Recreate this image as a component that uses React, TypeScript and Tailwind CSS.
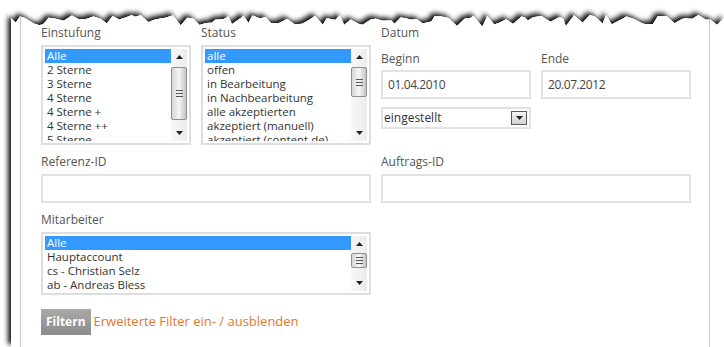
import React from "react";

function makeTorn() {
  let s = 11;
  const rnd = () => {
    s = (s * 9301 + 49297) % 233280;
    return s / 233280;
  };
  const pts: [number, number][] = [];
  let x = 11;
  while (x < 724) {
    let y = 15 + rnd() * 5;
    if (rnd() < 0.35) y += 4 + rnd() * 4;
    pts.push([x, Math.round(y * 10) / 10]);
    x += 3 + rnd() * 6;
  }
  pts.push([724, 18]);
  return pts;
}

function TornEdge() {
  const pts = makeTorn();
  const first = pts[0];
  const last = pts[pts.length - 1];
  const line = pts.map((p) => `L${p[0]},${p[1]}`).join(" ");
  const paper = `M11,347 ${line} L724,347 Z`;
  const rev = [...pts].reverse().map((p) => `L${p[0]},${p[1]}`).join(" ");
  const outside = `M0,0 L724,0 L724,${last[1]} ${rev} L11,${first[1]} L11,347 L0,347 Z`;
  return (
    <svg
      className="absolute inset-0 pointer-events-none"
      width="724"
      height="347"
      viewBox="0 0 724 347"
    >
      <defs>
        <clipPath id="outsidePaper">
          <path d={outside} />
        </clipPath>
        <filter id="tearShadow" filterUnits="userSpaceOnUse" x="-30" y="-30" width="790" height="420">
          <feDropShadow dx="-3" dy="-3" stdDeviation="2.8" floodColor="#000" floodOpacity="0.95" />
        </filter>
      </defs>
      <g clipPath="url(#outsidePaper)">
        <rect x="0" y="0" width="724" height="347" fill="#ffffff" />
        <path d={paper} fill="#ffffff" filter="url(#tearShadow)" />
      </g>
    </svg>
  );
}

function Arrow({ down }: { down?: boolean }) {
  return (
    <svg width="7" height="4" viewBox="0 0 7 4">
      {down ? (
        <polygon points="0,0 7,0 3.5,4" fill="#222" />
      ) : (
        <polygon points="0,4 7,4 3.5,0" fill="#222" />
      )}
    </svg>
  );
}

function ScrollBar({ thumb }: { thumb: string }) {
  return (
    <div className="w-[16px] shrink-0 flex flex-col bg-gradient-to-r from-[#f7f7f7] to-[#ececec]">
      <div className="h-[16px] shrink-0 flex items-center justify-center">
        <Arrow />
      </div>
      <div
        className={`${thumb} shrink-0 rounded-[2px] border border-[#8f8f8f] bg-gradient-to-r from-[#d6d6d6] via-[#f6f6f6] to-[#c4c4c4] flex flex-col items-center justify-center gap-[2px]`}
      >
        <div className="w-[7px] h-[1px] bg-[#555]" />
        <div className="w-[7px] h-[1px] bg-[#555]" />
        <div className="w-[7px] h-[1px] bg-[#555]" />
      </div>
      <div className="flex-1" />
      <div className="h-[16px] shrink-0 flex items-center justify-center">
        <Arrow down />
      </div>
    </div>
  );
}

function ListBox({ items, h, thumb }: { items: string[]; h: string; thumb: string }) {
  return (
    <div className={`${h} flex border-2 border-[#dedede] p-[2px] bg-white`}>
      <div className="flex-1 min-w-0 overflow-hidden">
        {items.map((it, i) => (
          <div
            key={i}
            className={
              i === 0
                ? "h-[14px] leading-[14px] px-[2px] whitespace-nowrap text-[11.5px] bg-[#3399ff] text-white"
                : "h-[14px] leading-[14px] px-[2px] whitespace-nowrap text-[11.5px] text-[#333]"
            }
          >
            {it}
          </div>
        ))}
      </div>
      <ScrollBar thumb={thumb} />
    </div>
  );
}

function Label({ children, mb = "mb-[4px]" }: { children: React.ReactNode; mb?: string }) {
  return <div className={`text-[12px] leading-[16px] text-[#555] ${mb}`}>{children}</div>;
}

function TextInput({ value = "" }: { value?: string }) {
  return (
    <div className="h-[29px] w-full border-2 border-[#e2e2e2] bg-white px-[5px] flex items-center text-[12px] tracking-[-0.4px] text-[#444]">
      {value}
    </div>
  );
}

export default function App() {
  const einstufung = ["Alle", "2 Sterne", "3 Sterne", "4 Sterne", "4 Sterne +", "4 Sterne ++", "5 Sterne"];
  const status = [
    "alle",
    "offen",
    "in Bearbeitung",
    "in Nachbearbeitung",
    "alle akzeptierten",
    "akzeptiert (manuell)",
    "akzeptiert (content.de)",
  ];
  const mitarbeiter = ["Alle", "Hauptaccount", "cs - Christian Selz", "ab - Andreas Bless"];

  return (
    <div className="relative w-[724px] h-[347px] overflow-hidden bg-white pl-[20px] font-['Open_Sans','Noto_Sans',sans-serif]">
      <div className="w-[690px] h-full border-x border-[#cacaca] pl-[20px] pt-[25px]">
        <div className="grid grid-cols-[150px_170px_150px_150px] gap-x-[10px]">
          <div>
            <Label>Einstufung</Label>
            <ListBox items={einstufung} h="h-[100px]" thumb="mt-[2px] h-[53px]" />
          </div>
          <div>
            <Label>Status</Label>
            <ListBox items={status} h="h-[100px]" thumb="mt-[2px] h-[30px]" />
          </div>
          <div className="col-span-2 flex flex-col">
            <Label mb="mb-[10px]">Datum</Label>
            <div className="grid grid-cols-[150px_150px] gap-x-[10px]">
              <div>
                <Label mb="mb-[3px]">Beginn</Label>
                <TextInput value="01.04.2010" />
              </div>
              <div>
                <Label mb="mb-[3px]">Ende</Label>
                <TextInput value="20.07.2012" />
              </div>
            </div>
            <div className="mt-[8px] w-[150px] h-[22px] border-2 border-[#e2e2e2] bg-white flex items-center pl-[1px] pr-[2px]">
              <div className="flex-1 text-[12px] text-[#333] leading-[16px]">eingestellt</div>
              <div className="w-[16px] h-[14px] border border-[#5a5a5a] bg-gradient-to-b from-[#f6f6f6] to-[#d2d2d2] flex items-center justify-center">
                <Arrow down />
              </div>
            </div>
          </div>
          <div className="col-span-2 mt-[9px]">
            <Label>Referenz-ID</Label>
            <TextInput />
          </div>
          <div className="col-span-2 mt-[9px]">
            <Label>Auftrags-ID</Label>
            <TextInput />
          </div>
          <div className="col-span-2 mt-[9px]">
            <Label>Mitarbeiter</Label>
            <ListBox items={mitarbeiter} h="h-[63px]" thumb="mt-[1px] h-[15px]" />
          </div>
        </div>
        <div className="mt-[14px] flex items-center">
          <div className="h-[26px] px-[5px] flex items-center bg-gradient-to-b from-[#a9a9a9] to-[#8b8b8b] text-white font-bold text-[12px]">
            Filtern
          </div>
          <div className="ml-[3px] text-[13px] text-[#e2782f]">Erweiterte Filter ein- / ausblenden</div>
        </div>
      </div>
      <TornEdge />
    </div>
  );
}
